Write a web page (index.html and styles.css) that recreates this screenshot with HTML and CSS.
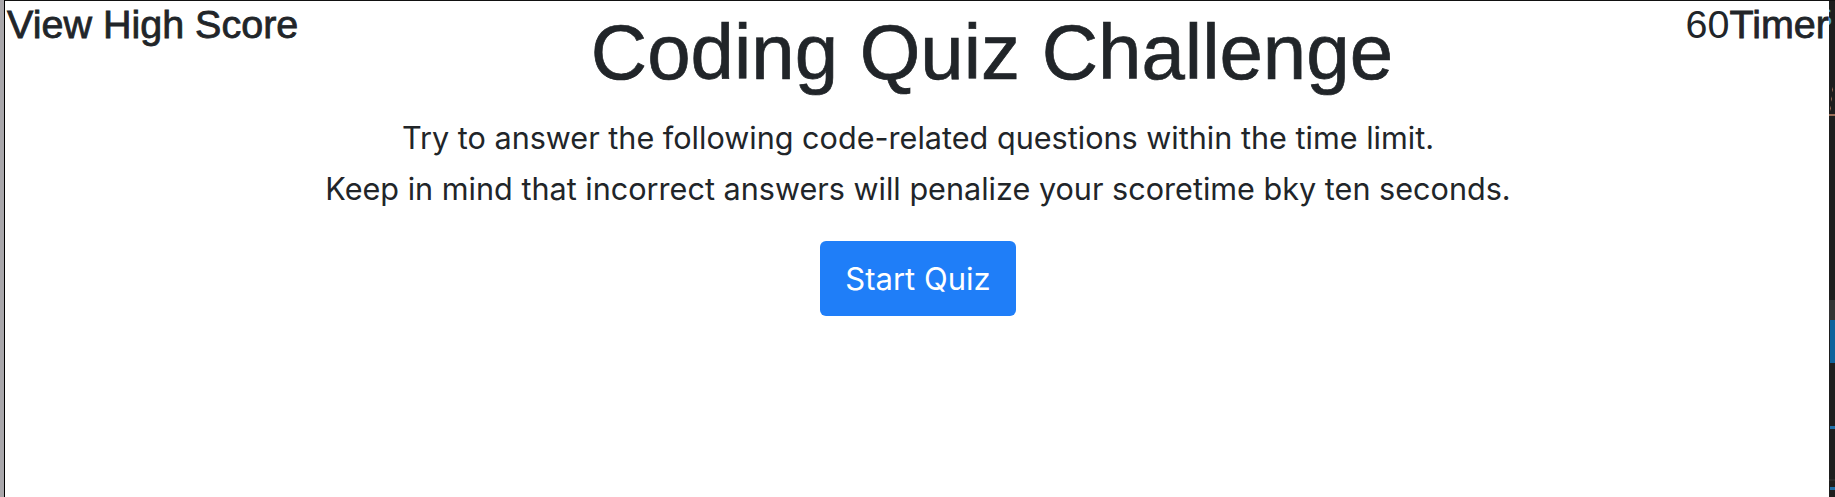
FILE: index.html
```html
<!DOCTYPE html>
<html lang="en">
<head>
<meta charset="utf-8">
<title>Coding Quiz Challenge</title>
<link rel="stylesheet" href="styles.css">
</head>
<body>
<div class="frame">
  <div class="gutter"></div>
  <main class="page">
    <header class="top">
      <h3 class="nav-link">View High Score</h3>
      <h1 class="title">Coding Quiz Challenge</h1>
      <h3 class="timer"><span class="count">60</span>Timer</h3>
    </header>
    <section class="intro">
      <p class="lead">Try to answer the following code-related questions within the time limit.</p>
      <p class="lead">Keep in mind that incorrect answers will penalize your scoretime bky ten seconds.</p>
      <button class="btn-start" type="button">Start Quiz</button>
    </section>
  </main>
  <aside class="editor">
    <div class="ed-s">s</div>
    <div class="ed-slash"></div>
    <div class="ed-under"></div>
    <div class="ed-gray"></div>
    <div class="ed-blue"></div>
    <div class="ed-line1"></div>
    <div class="ed-line2"></div>
    <div class="ed-line3"></div>
  </aside>
</div>
</body>
</html>
```
FILE: styles.css
```css
* { box-sizing: border-box; }
html, body { margin: 0; padding: 0; }
body {
  width: 1835px;
  height: 497px;
  overflow: hidden;
  background: #ffffff;
}
.frame {
  display: flex;
  height: 497px;
}
.gutter {
  width: 5px;
  background: #a9a7ab;
  border-right: 1px solid #000;
}
.page {
  flex: 1;
  min-width: 0;
  background: #fff;
  border-top: 1px solid #111;
  color: #212529;
  padding-left: 2px;
}
.top {
  display: flex;
  justify-content: space-between;
  align-items: flex-start;
}
.nav-link, .timer {
  margin: 0;
  font-family: "Liberation Sans", Arial, sans-serif;
  font-weight: 400;
  font-size: 39.5px;
  line-height: 1.2;
  white-space: nowrap;
  -webkit-text-stroke: 0.8px #212529;
}
.timer .count {
  -webkit-text-stroke: 0;
}
.title {
  margin: 5px 0 0;
  font-family: "Liberation Sans", Arial, sans-serif;
  font-weight: 400;
  font-size: 78px;
  line-height: 1.2;
  white-space: nowrap;
  -webkit-text-stroke: 0.7px #212529;
}
.intro {
  display: flex;
  flex-direction: column;
  align-items: center;
  margin-top: 12px;
}
.lead {
  margin: 0;
  font-family: Inter, "Noto Sans", sans-serif;
  font-size: 30.6px;
  line-height: 51px;
  font-weight: 400;
  white-space: nowrap;
}
.btn-start {
  margin-top: 27px;
  width: 196px;
  height: 75px;
  border: none;
  border-radius: 6px;
  background: #1f7ef8;
  color: #fff;
  font-family: Inter, "Noto Sans", sans-serif;
  font-size: 31px;
  font-weight: 400;
  cursor: pointer;
}
.editor {
  width: 6px;
  background: #1e1e1e;
  overflow: hidden;
  border-top: 1px solid #111;
}
.ed-s {
  font-family: "DejaVu Sans", sans-serif;
  font-size: 30px;
  line-height: 30px;
  color: #4ea0cf;
  margin-left: -12px;
  height: 40px;
}
.ed-slash {
  height: 28px;
  margin-top: 44px;
  margin-left: 1px;
  width: 3px;
  background: linear-gradient(to bottom right, transparent 45%, #a0705a 50%, transparent 55%);
}
.ed-under {
  height: 2px;
  width: 6px;
  margin-top: 1px;
  background: #9c6e58;
}
.ed-gray {
  height: 20px;
  margin-top: 184px;
  background: #333334;
}
.ed-blue {
  height: 43px;
  margin-left: 1px;
  background: #0e639c;
}
.ed-line1 {
  height: 3px;
  width: 5px;
  margin-top: 63px;
  margin-left: 1px;
  background: #1f6ea8;
}
.ed-line2 {
  height: 2px;
  margin-top: 50px;
  background: #2a2a2a;
}
.ed-line3 {
  height: 3px;
  width: 5px;
  margin-top: 6px;
  margin-left: 1px;
  background: #1f6ea8;
}
```
